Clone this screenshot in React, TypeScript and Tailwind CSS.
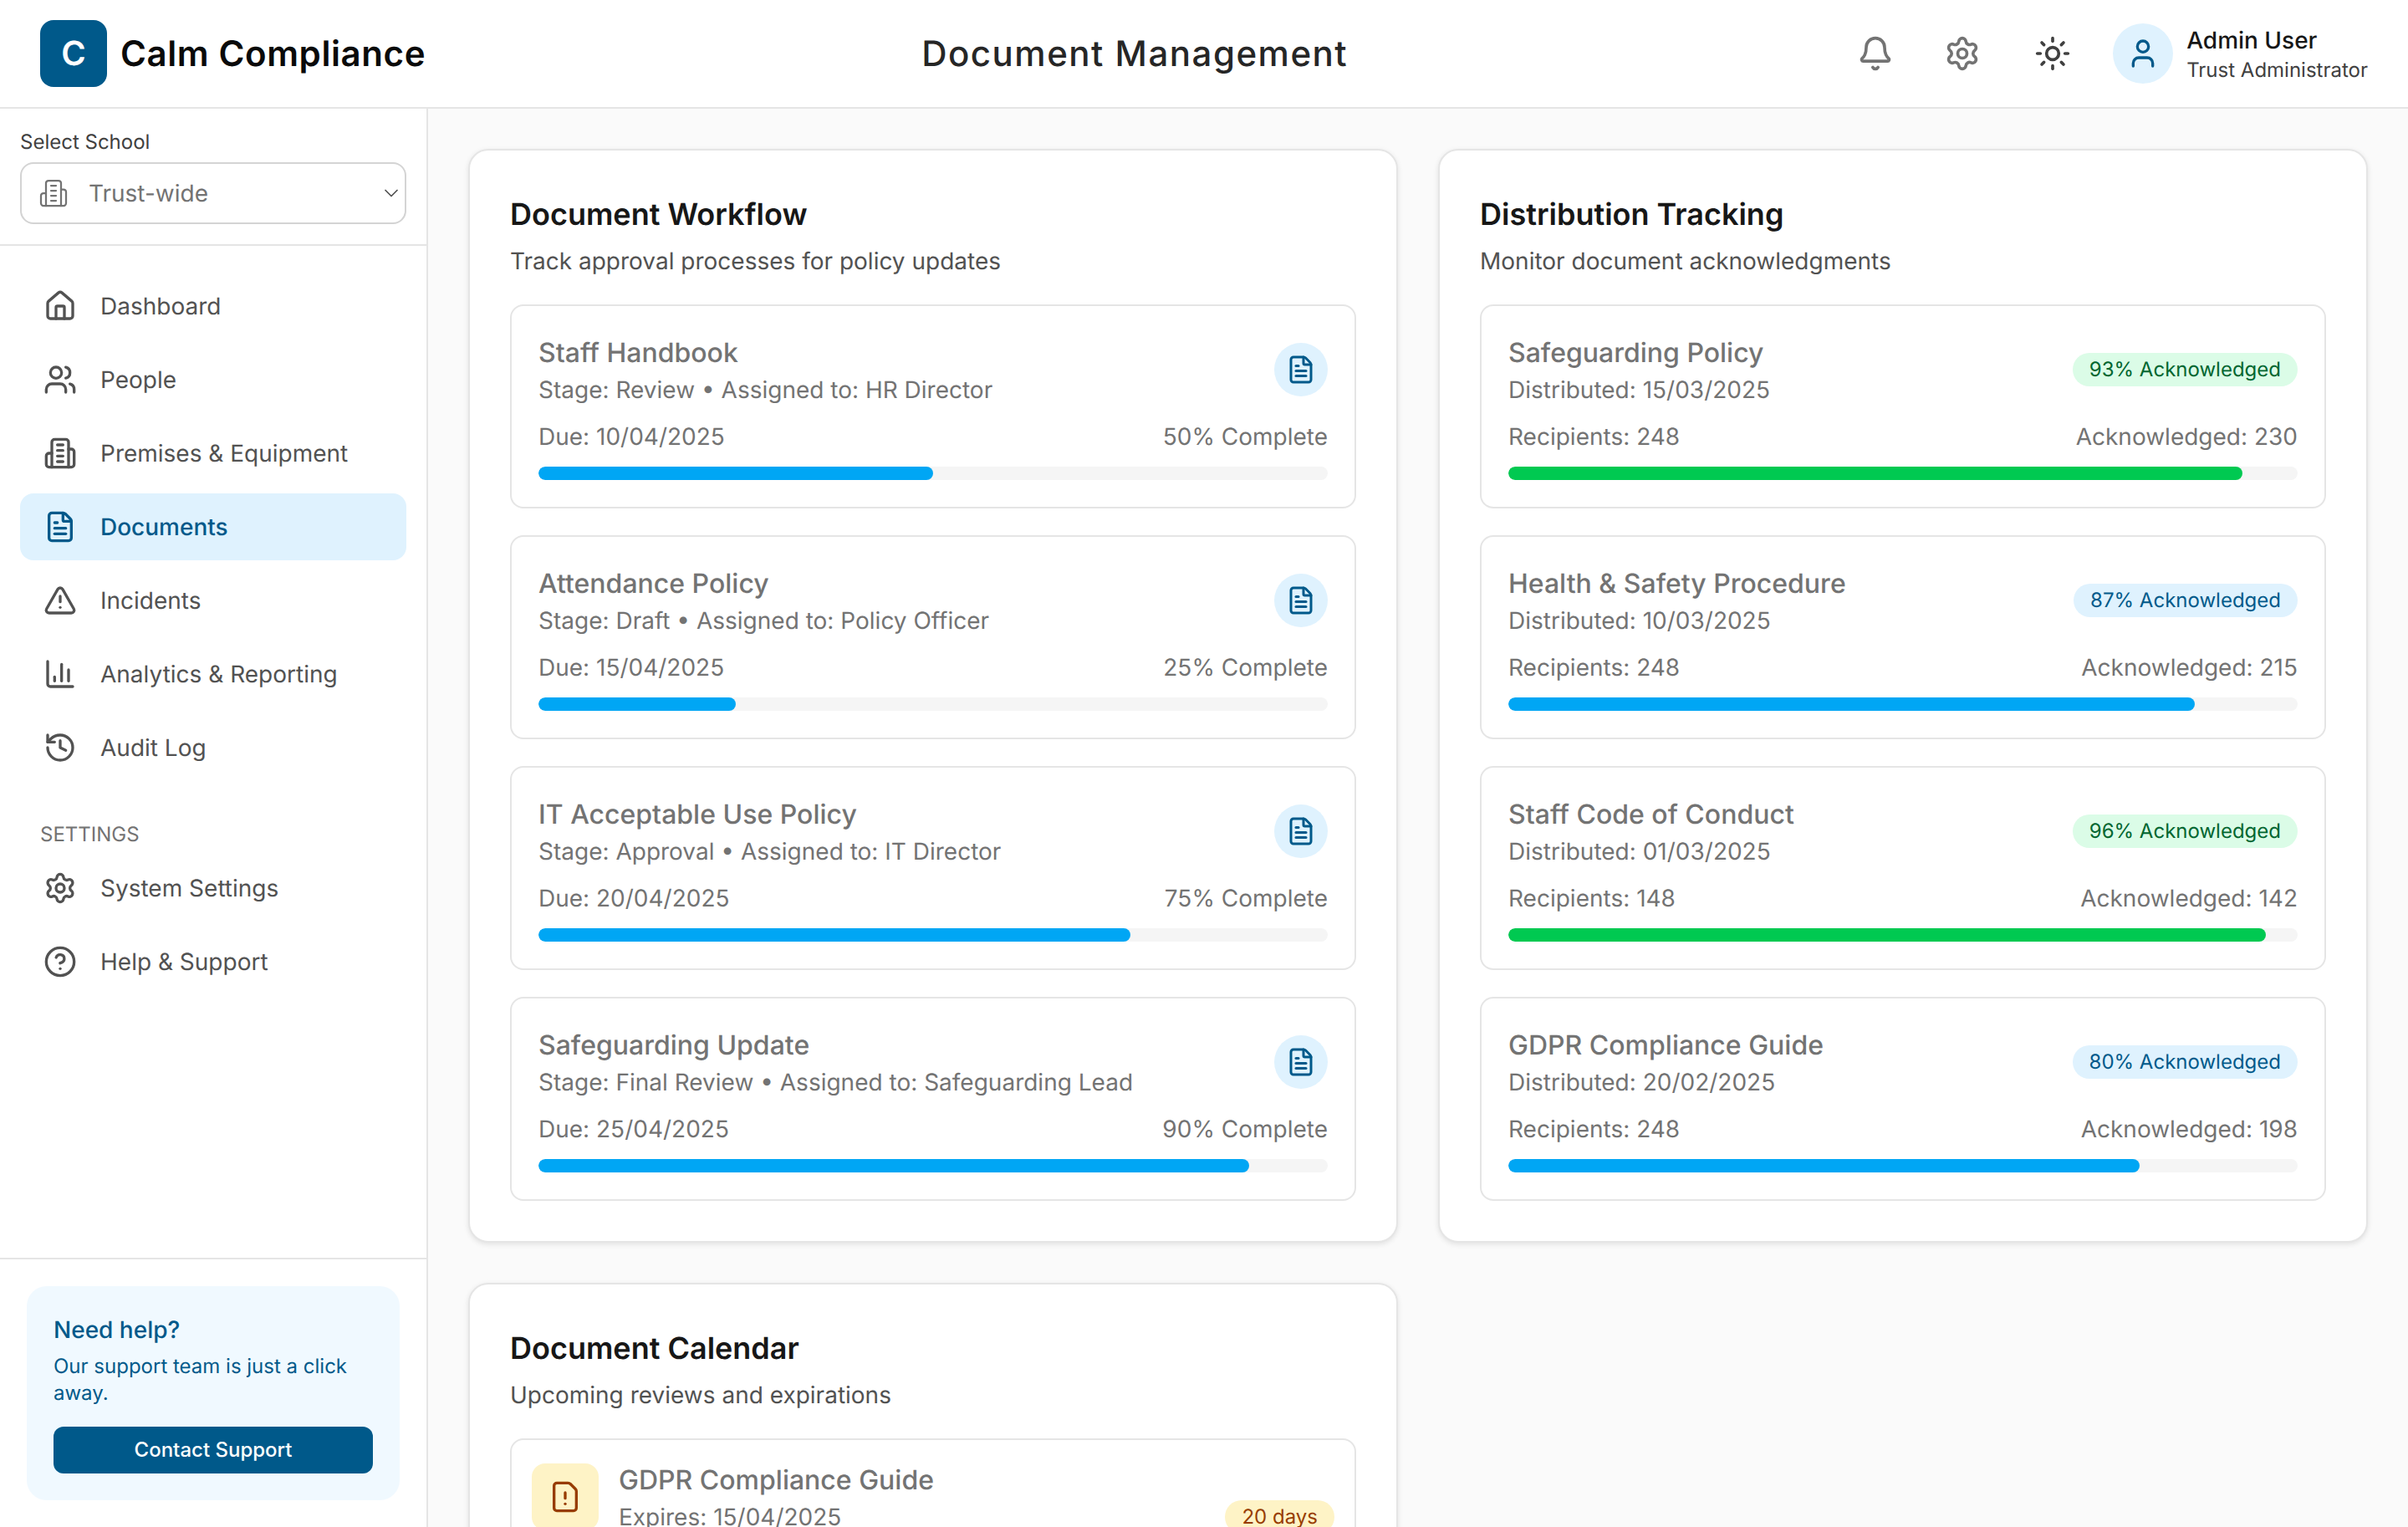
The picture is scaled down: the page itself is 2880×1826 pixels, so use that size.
import React from "react";
import { Bell, Settings, Sun, User, Home, Users, FileText, AlertTriangle, ChartColumn, History, HelpCircle, ChevronDown, FileWarning } from "lucide-react";

const font = "font-['Inter',sans-serif] [font-optical-sizing:none] [text-rendering:geometricPrecision]";

function Tower({ size = 24, strokeWidth = 2, className = "" }: { size?: number; strokeWidth?: number; className?: string }) {
  return (
    <svg width={size} height={size} viewBox="0 0 24 24" fill="none" stroke="currentColor" strokeWidth={strokeWidth} strokeLinecap="round" strokeLinejoin="round" className={className}>
      <path d="M6 22V4a2 2 0 0 1 2-2h8a2 2 0 0 1 2 2v18Z" />
      <path d="M6 12H4a2 2 0 0 0-2 2v6a2 2 0 0 0 2 2h2" />
      <path d="M18 9h2a2 2 0 0 1 2 2v9a2 2 0 0 1-2 2h-2" />
      <path d="M10 6h4" />
      <path d="M10 10h4" />
      <path d="M10 14h4" />
      <path d="M10 18h4" />
    </svg>
  );
}

const nav = [
  { label: "Dashboard", Icon: Home },
  { label: "People", Icon: Users },
  { label: "Premises & Equipment", Icon: Tower },
  { label: "Documents", Icon: FileText, active: true },
  { label: "Incidents", Icon: AlertTriangle },
  { label: "Analytics & Reporting", Icon: ChartColumn },
  { label: "Audit Log", Icon: History },
];

const workflow = [
  { title: "Staff Handbook", meta: "Stage: Review • Assigned to: HR Director", due: "Due: 10/04/2025", pct: 50 },
  { title: "Attendance Policy", meta: "Stage: Draft • Assigned to: Policy Officer", due: "Due: 15/04/2025", pct: 25 },
  { title: "IT Acceptable Use Policy", meta: "Stage: Approval • Assigned to: IT Director", due: "Due: 20/04/2025", pct: 75 },
  { title: "Safeguarding Update", meta: "Stage: Final Review • Assigned to: Safeguarding Lead", due: "Due: 25/04/2025", pct: 90 },
];

const distribution = [
  { title: "Safeguarding Policy", date: "Distributed: 15/03/2025", rec: 248, ack: 230, pct: 93, green: true },
  { title: "Health & Safety Procedure", date: "Distributed: 10/03/2025", rec: 248, ack: 215, pct: 87, green: false },
  { title: "Staff Code of Conduct", date: "Distributed: 01/03/2025", rec: 148, ack: 142, pct: 96, green: true },
  { title: "GDPR Compliance Guide", date: "Distributed: 20/02/2025", rec: 248, ack: 198, pct: 80, green: false },
];

function NavItem({ label, Icon, active }: { label: string; Icon: React.ComponentType<any>; active?: boolean }) {
  return (
    <a className={`flex h-20 items-center gap-7 rounded-2xl px-7 text-[28px] leading-10 ${active ? "bg-sky-100 font-medium text-sky-800" : "text-neutral-600"}`}>
      <Icon size={40} />
      <span>{label}</span>
    </a>
  );
}

function Bar({ pct, color }: { pct: number; color: string }) {
  return (
    <div className="mt-4 h-4 w-full overflow-hidden rounded-full bg-neutral-100">
      <div className={`h-full rounded-full ${color}`} style={{ width: `${pct}%` }} />
    </div>
  );
}

function Card({ title, sub, children }: { title: string; sub: string; children: React.ReactNode }) {
  return (
    <section className="rounded-3xl border-2 border-neutral-200 bg-white p-12 shadow-[0_2px_6px_rgba(0,0,0,0.1)]">
      <h2 className="text-[36px] font-semibold leading-14 text-neutral-900">{title}</h2>
      <p className="mt-2 mb-8 text-[28px] leading-10 text-neutral-600">{sub}</p>
      <div className="flex flex-col gap-8">{children}</div>
    </section>
  );
}

export default function App() {
  return (
    <div className={`flex h-screen flex-col overflow-hidden bg-neutral-50 ${font}`}>
      <header className="flex h-[130px] shrink-0 items-center justify-between border-b-2 border-neutral-200 bg-white px-12">
        <div className="flex items-center gap-4">
          <div className="flex h-20 w-20 items-center justify-center rounded-2xl bg-sky-800 text-[40px] font-semibold text-white">C</div>
          <span className="text-[42px] font-semibold tracking-[0.6px] text-neutral-950">Calm Compliance</span>
        </div>
        <h1 className="text-[42px] font-medium tracking-[1.5px] text-neutral-800">Document Management</h1>
        <div className="flex items-center">
          <button className="p-4 text-neutral-500"><Bell size={44} /></button>
          <button className="ml-7 p-4 text-neutral-500"><Settings size={44} /></button>
          <button className="ml-8 p-4 text-neutral-700"><Sun size={44} /></button>
          <div className="ml-[34px] flex items-center gap-4">
            <div className="flex h-[72px] w-[72px] items-center justify-center rounded-full bg-sky-100 text-sky-800"><User size={40} /></div>
            <div className="pt-1">
              <div className="text-[28px] font-medium leading-9 text-neutral-900">Admin User</div>
              <div className="text-[24px] leading-9 text-neutral-700">Trust Administrator</div>
            </div>
          </div>
        </div>
      </header>
      <div className="flex min-h-0 flex-1">
        <aside className="flex w-[512px] shrink-0 flex-col border-r-2 border-neutral-200 bg-white">
          <div className="border-b-2 border-neutral-200 p-6">
            <label className="mb-2 block text-[24px] leading-8 text-neutral-700">Select School</label>
            <div className="flex h-[74px] items-center rounded-2xl border-2 border-neutral-300 bg-white pr-[2px] pl-5 text-neutral-500">
              <Tower size={36} strokeWidth={1.5} />
              <span className="ml-6 flex-1 text-[28px]">Trust-wide</span>
              <ChevronDown size={28} strokeWidth={1.5} className="text-neutral-600" />
            </div>
          </div>
          <nav className="flex flex-1 flex-col gap-2 px-6 pt-8">
            {nav.map((n) => <NavItem key={n.label} {...n} />)}
            <div className="mt-10 px-6 text-[24px] leading-8 text-neutral-500">SETTINGS</div>
            <NavItem label="System Settings" Icon={Settings} />
            <NavItem label="Help & Support" Icon={HelpCircle} />
          </nav>
          <div className="border-t-2 border-neutral-200 p-8">
            <div className="rounded-3xl bg-sky-50 p-8">
              <div className="text-[28px] font-medium leading-10 text-sky-800">Need help?</div>
              <p className="mt-2 text-[24px] leading-8 text-sky-800">Our support team is just a click away.</p>
              <button className="mt-6 h-14 w-full rounded-xl bg-sky-800 text-[24px] font-medium text-white">Contact Support</button>
            </div>
          </div>
        </aside>
        <main className="min-w-0 flex-1 overflow-hidden p-12">
          <div className="grid grid-cols-2 items-start gap-12">
            <Card title="Document Workflow" sub="Track approval processes for policy updates">
              {workflow.map((w) => (
                <div key={w.title} className="rounded-2xl border-2 border-neutral-200 p-8 text-neutral-500">
                  <div className="flex items-center justify-between">
                    <div>
                      <div className="text-[32px] font-medium leading-12">{w.title}</div>
                      <div className="text-[28px] leading-10">{w.meta}</div>
                    </div>
                    <div className="flex h-16 w-16 items-center justify-center rounded-full bg-sky-100 text-sky-800"><FileText size={36} /></div>
                  </div>
                  <div className="mt-4 flex justify-between text-[28px] leading-10">
                    <span>{w.due}</span>
                    <span>{w.pct}% Complete</span>
                  </div>
                  <Bar pct={w.pct} color="bg-sky-500" />
                </div>
              ))}
            </Card>
            <Card title="Distribution Tracking" sub="Monitor document acknowledgments">
              {distribution.map((d) => (
                <div key={d.title} className="rounded-2xl border-2 border-neutral-200 p-8 text-neutral-500">
                  <div className="flex items-center justify-between">
                    <div>
                      <div className="text-[32px] font-medium leading-12">{d.title}</div>
                      <div className="text-[28px] leading-10">{d.date}</div>
                    </div>
                    <span className={`rounded-full px-5 text-[24px] leading-10 ${d.green ? "bg-green-100 text-green-800" : "bg-sky-100 text-sky-800"}`}>{d.pct}% Acknowledged</span>
                  </div>
                  <div className="mt-4 flex justify-between text-[28px] leading-10">
                    <span>Recipients: {d.rec}</span>
                    <span>Acknowledged: {d.ack}</span>
                  </div>
                  <Bar pct={d.pct} color={d.green ? "bg-green-500" : "bg-sky-500"} />
                </div>
              ))}
            </Card>
            <Card title="Document Calendar" sub="Upcoming reviews and expirations">
              <div className="rounded-2xl border-2 border-neutral-200 p-6 text-neutral-500">
                <div className="flex items-end justify-between">
                  <div className="flex items-center gap-6">
                    <div className="flex h-20 w-20 items-center justify-center rounded-2xl bg-amber-100 text-amber-800"><FileWarning size={40} /></div>
                    <div>
                      <div className="text-[32px] font-medium leading-12">GDPR Compliance Guide</div>
                      <div className="text-[28px] leading-10">Expires: 15/04/2025</div>
                    </div>
                  </div>
                  <span className="rounded-full bg-amber-100 px-5 text-[24px] leading-10 text-amber-800">20 days</span>
                </div>
              </div>
            </Card>
          </div>
        </main>
      </div>
    </div>
  );
}
